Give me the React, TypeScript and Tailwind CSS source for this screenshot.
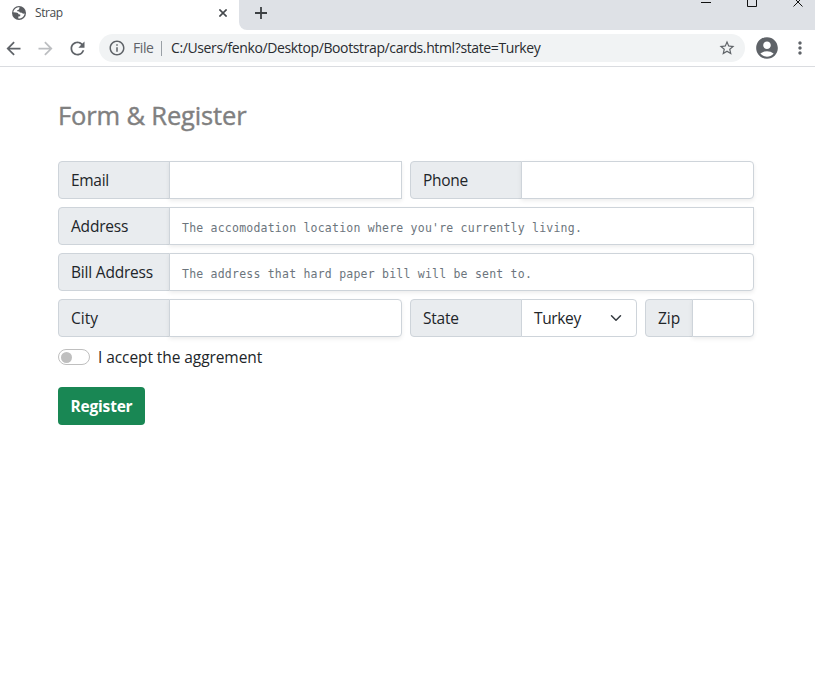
import type { ReactNode } from "react";
import {
  MdAccountCircle,
  MdArrowBack,
  MdArrowForward,
  MdMoreVert,
  MdOutlineInfo,
  MdRefresh,
  MdStarBorder,
} from "react-icons/md";

function GlobeIcon() {
  return (
    <svg className="mt-[5px] ml-[11px] shrink-0" width="16" height="16" viewBox="0 0 16 16">
      <circle cx="8" cy="8" r="7" fill="#5a5d61" />
      <path
        d="M8.600 2.300C5.500 2 2.700 4.200 2.300 7.300L5 7.500C6.500 7.500 7.400 8.300 7.500 9.300L9.300 9.500 9.200 11.200 7.300 11.500V13.600C10.500 13.800 13.200 11.500 13.700 8.500L12 8.800 10.800 7.700 8.800 7.600 8.200 6.400 6.300 6.300 6.200 5.200 8 4.600Z"
        fill="#fff"
      />
    </svg>
  );
}

function TabStrip() {
  return (
    <div className="flex h-[30px] bg-[#dee1e6]">
      <div className="flex h-[30px] w-[239px] shrink-0 items-start bg-white">
        <GlobeIcon />
        <span className="mt-[4px] ml-[8px] text-[12px] leading-[18px] tracking-[-0.45px] text-[#45494d]">Strap</span>
        <svg className="mt-[9px] mr-[12px] ml-auto" width="8" height="8" viewBox="0 0 8 8" stroke="#45494d" strokeWidth="1.6">
          <path d="M0.4 0.4 7.6 7.6M7.6 0.4 0.4 7.6" />
        </svg>
      </div>
      <div className="flex flex-1 bg-white">
        <div className="flex flex-1 items-start rounded-bl-[8px] bg-[#dee1e6]">
          <svg className="mt-[7px] ml-[16px]" width="12" height="12" viewBox="0 0 12 12" stroke="#3c4043" strokeWidth="1.8">
            <path d="M6 0v12M0 6h12" />
          </svg>
          <svg className="mr-[12px] ml-auto" width="102" height="10" viewBox="0 0 102 10" fill="none" stroke="#111" strokeWidth="1">
            <path d="M0 2.5h10M46.5 -3v9.500h9v-9.500M92.500 -2.500l9 9M101.500 -2.500l-9 9" />
          </svg>
        </div>
      </div>
    </div>
  );
}

function Toolbar() {
  return (
    <div className="flex h-[37px] items-center border-b border-[#dadce0] bg-white text-[#5f6368]">
      <MdArrowBack size={21} className="ml-[2.500px] shrink-0" />
      <MdArrowForward size={21} className="ml-[11px] shrink-0 text-[#bcbec1]" />
      <MdRefresh size={21} className="ml-[11px] shrink-0" />
      <div className="ml-[11.500px] flex h-[28px] w-[646px] shrink-0 items-center rounded-full bg-[#f1f3f4]">
        <MdOutlineInfo size={18} className="ml-[9px]" />
        <span className="ml-[7px] w-[21px] text-[14px] tracking-[-0.4px]">File</span>
        <span className="ml-[7px] h-[15px] w-px bg-[#9aa0a6]" />
        <span className="ml-[9px] text-[14px] tracking-[-0.38px] whitespace-nowrap text-[#292c30]">
          C:/Users/fenko/Desktop/Bootstrap/cards.html?state=Turkey
        </span>
        <MdStarBorder size={18} className="mr-[9px] ml-auto" />
      </div>
      <MdAccountCircle size={26} className="ml-[9px] shrink-0" />
      <MdMoreVert size={20} className="ml-[9.500px] shrink-0" />
    </div>
  );
}

type FieldProps = {
  label: string;
  className: string;
  labelWidth?: string;
  tracking?: string;
  boxClass?: string;
  children?: ReactNode;
};

function Field({
  label,
  className,
  labelWidth = "w-[112px]",
  tracking = "tracking-[-0.2px]",
  boxClass = "rounded-r shadow-[0_2px_4px_rgba(0,0,0,0.075)]",
  children,
}: FieldProps) {
  return (
    <div className={`flex h-[38px] ${className}`}>
      <div
        className={`flex shrink-0 items-center rounded-l border border-[#ced4da] bg-[#e9ecef] pl-3 whitespace-nowrap ${labelWidth} ${tracking}`}
      >
        {label}
      </div>
      <div className={`-ml-px flex min-w-0 flex-1 items-center border border-[#ced4da] bg-white px-3 ${boxClass}`}>
        {children}
      </div>
    </div>
  );
}

const squareBox = "shadow-[0_2px_4px_rgba(0,0,0,0.075)]";

function Placeholder({ text }: { text: string }) {
  return (
    <span className="mt-[3px] font-['DejaVu_Sans_Mono','Liberation_Mono',monospace] text-[11.500px] tracking-[0.220px] whitespace-nowrap text-[#6c757d]">
      {text}
    </span>
  );
}

export default function App() {
  return (
    <div className="h-[697px] w-[815px] overflow-hidden bg-white font-['Open_Sans','Noto_Sans',sans-serif] text-[15.500px] leading-6 text-[#212529]">
      <TabStrip />
      <Toolbar />
      <main className="ml-[58px] w-[696px]">
        <h1 className="pt-[33px] text-[25.500px] leading-[30px] tracking-[-0.15px] text-[#808080] [-webkit-text-stroke:0.4px_#808080]">
          Form &amp; Register
        </h1>
        <form className="mt-[31px]">
          <div className="flex flex-col gap-2">
            <div className="flex gap-2">
              <Field label="Email" className="w-[344px]" tracking="tracking-[-0.3px]" boxClass={squareBox} />
              <Field label="Phone" className="w-[344px]" tracking="tracking-[-0.3px]" />
            </div>
            <Field label="Address" className="w-full" boxClass={squareBox}>
              <Placeholder text="The accomodation location where you're currently living." />
            </Field>
            <Field label="Bill Address" className="w-full">
              <Placeholder text="The address that hard paper bill will be sent to." />
            </Field>
            <div className="flex gap-2">
              <Field label="City" className="w-[344px]" tracking="tracking-[0px]" />
              <Field label="State" className="w-[227px]" boxClass="rounded-r">
                <span className="tracking-[-0.35px]">Turkey</span>
                <svg className="ml-auto" width="16" height="12" viewBox="0 0 16 16" fill="none" stroke="#343a40" strokeWidth="2" strokeLinecap="round" strokeLinejoin="round">
                  <path d="m2 5 6 6 6-6" />
                </svg>
              </Field>
              <Field label="Zip" className="w-[109px]" labelWidth="w-[48px]" tracking="tracking-[0px]" />
            </div>
          </div>
          <label className="mt-[8px] flex h-6 items-center">
            <span className="flex h-4 w-8 items-center rounded-full border border-[#bfbfbf] bg-white pl-[2px]">
              <span className="size-[11px] rounded-full bg-[#bfbfbf]" />
            </span>
            <span className="ml-2 tracking-[-0.08px]">I accept the aggrement</span>
          </label>
          <button
            type="button"
            className="mt-[18px] h-[38px] w-[87px] rounded bg-[#198754] font-bold tracking-[-0.2px] text-white"
          >
            Register
          </button>
        </form>
      </main>
    </div>
  );
}
